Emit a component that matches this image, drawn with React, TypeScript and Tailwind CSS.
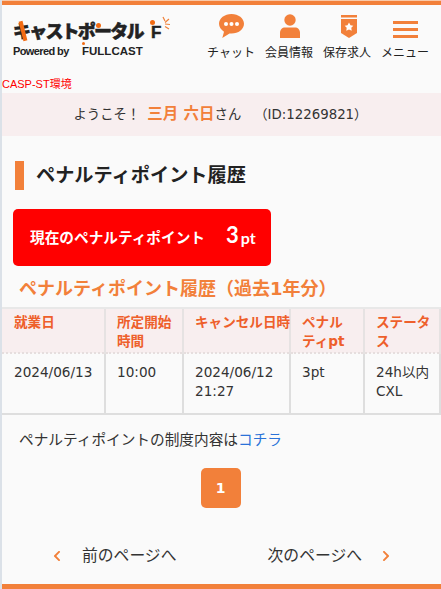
import React from "react";
import { FaChevronLeft, FaChevronRight } from "react-icons/fa";

const font = "font-['DejaVu_Sans','Noto_Sans_CJK_JP',sans-serif]";

const NavItem = ({ icon, label }: { icon: React.ReactNode; label: string }) => (
  <div className="flex w-[48px] flex-col items-center">
    <div className="flex h-[32px] items-center justify-center">{icon}</div>
    <span className="mt-[3px] text-[12px] leading-[16px] whitespace-nowrap text-[#222]">{label}</span>
  </div>
);

const Logo = () => (
  <div className="relative h-[36px] w-[160px]">
    <div className="text-[18px] leading-[20px] font-black tracking-[-1.800px] whitespace-nowrap text-[#222] [-webkit-text-stroke:0.5px_#222]">キャストポータル</div>
    <span className="absolute top-[-1px] left-[8px] h-[20px] w-[4px] rotate-[-14deg] bg-[#f26b12]" />
    <span className="absolute top-[1px] left-[83px] h-[5px] w-[5px] rounded-full bg-[#f26b12]" />
    <span className="absolute top-[2px] left-[138px] font-['Liberation_Sans'] text-[17px] leading-[18px] font-bold text-[#222] [-webkit-text-stroke:0.5px_#222]">F</span>
    <span className="absolute top-[-2px] left-[137px] h-[5px] w-[5px] rounded-full bg-[#f26b12]" />
    <svg className="absolute top-[-6px] left-[148px]" width="10" height="16" viewBox="0 0 10 16">
      <path d="M2 1l2 4M8 3L4 6.500M9 8.500l-5-.5M8 13L4 10.500" stroke="#f08038" strokeWidth="1.200" fill="none" />
    </svg>
    <div className="relative mt-[2px] font-['Liberation_Sans'] text-[11px] leading-[14px] font-bold whitespace-nowrap text-[#222]">
      <span className="tracking-[-0.600px]">Powered by</span>
      <span className="absolute top-0 left-[69px] text-[11.500px]">FULLCAST</span>
      <span className="absolute top-[-2px] left-[69px] h-[3px] w-[3px] rounded-full bg-[#f26b12]" />
    </div>
  </div>
);

const Th = ({ className, children }: { className: string; children: React.ReactNode }) => (
  <th className={`border-r-2 border-b-2 border-r-[#e6e2e2] border-b-[#e6dede] [border-bottom-style:dotted] bg-[#f8eeef] pt-[4px] pr-[2px] pb-[1px] pl-[11px] text-left align-top text-[13.600px] leading-[19px] font-bold text-[#ee5f2b] first:pl-[12px] ${className}`}>
    {children}
  </th>
);

const Td = ({ children }: { children: React.ReactNode }) => (
  <td className="border-r-2 border-b-2 border-[#dedede] pt-[9px] pr-[2px] pb-[10px] pl-[11px] align-top text-[13.600px] leading-[19px] text-[#333] first:pl-[12px]">
    {children}
  </td>
);

export default function App() {
  return (
    <div className={`flex h-[589px] w-[441px] flex-col overflow-hidden border-l-2 border-[#dbe1e8] bg-[#fafafa] ${font}`}>
      <div className="h-[5px] shrink-0 border-t border-[#f9c9a9] bg-[#f2803a]" />
      <header className="flex h-[71px] shrink-0 items-start justify-between pt-[5px] pr-[12px] pl-[11px]">
        <div className="pt-[12px]">
          <Logo />
        </div>
        <nav className="flex gap-[10px]">
          <NavItem
            label="チャット"
            icon={
              <svg width="25" height="24" viewBox="0 0 25 24">
                <path d="M12.500 0C5.600 0 0 4.300 0 9.800c0 3.300 2 6.100 5 7.900L3.300 24l7.200-4.500c.7.100 1.300.1 2 .1 6.900 0 12.500-4.300 12.500-9.800S19.400 0 12.500 0z" fill="#f2803a" />
                <circle cx="7" cy="10" r="2" fill="#fff" />
                <circle cx="12.500" cy="10" r="2" fill="#fff" />
                <circle cx="18" cy="10" r="2" fill="#fff" />
              </svg>
            }
          />
          <NavItem
            label="会員情報"
            icon={
              <svg className="ml-[2px]" width="20" height="24" viewBox="0 0 20 24">
                <circle cx="10" cy="6" r="5.700" fill="#f2803a" />
                <path d="M0 24v-5c0-3.500 2.200-5.500 5-5.500h10c2.800 0 5 2 5 5.500v5z" fill="#f2803a" />
              </svg>
            }
          />
          <NavItem
            label="保存求人"
            icon={
              <svg className="ml-[4px]" width="16" height="23" viewBox="0 0 16 23">
                <rect x="0" y="0" width="16" height="2.500" fill="#f2803a" />
                <path d="M0 4h16v14l-8 5-8-5z" fill="#f2803a" />
                <path d="M8 7.500l1.500 2.700 2.800.5-2 2.100.4 3L8 14.500l-2.700 1.300.4-3-2-2.100 2.800-.5z" fill="#fff" />
              </svg>
            }
          />
          <NavItem
            label="メニュー"
            icon={
              <div className="mt-[7px] flex w-[25px] flex-col gap-[4px]">
                <div className="h-[3px] bg-[#f2803a]" />
                <div className="h-[3px] bg-[#f2803a]" />
                <div className="h-[3px] bg-[#f2803a]" />
              </div>
            }
          />
        </nav>
      </header>
      <div className="h-[17px] shrink-0 font-['Liberation_Sans','Noto_Sans_CJK_JP',sans-serif] text-[11px] leading-[17px] text-[#ff0000]">CASP-ST環境</div>
      <div className="flex h-[43px] shrink-0 items-center justify-center bg-[#f8eeef] pr-[2px] text-[13.330px] text-[#333]">
        <span>ようこそ！</span>
        <span className="ml-[7px] text-[15.500px] font-bold text-[#f2803a]">三月 六日</span>
        <span>さん</span>
        <span className="ml-[13px]">（ID:12269821）</span>
      </div>
      <h1 className="mt-[25px] ml-[13px] flex h-[29px] shrink-0 items-center border-l-[9px] border-[#f2803a] pl-[12px] text-[19.200px] leading-[29px] font-bold text-[#222]">
        ペナルティポイント履歴
      </h1>
      <div className="mt-[19px] ml-[11px] flex h-[57px] w-[258px] shrink-0 items-center rounded-[5px] bg-[#ff0000] pl-[17px] font-bold text-white">
        <span className="text-[14.670px]">現在のペナルティポイント</span>
        <span className="mb-[5px] ml-[21px] font-['Lato'] text-[22px] leading-none">3</span>
        <span className="ml-[2px] font-['Lato'] text-[16px] leading-none">pt</span>
      </div>
      <h2 className="mt-[8px] ml-[17px] h-[33px] shrink-0 text-[18px] leading-[30px] font-bold whitespace-nowrap text-[#f2803a]">
        ペナルティポイント履歴（過去1年分）
      </h2>
      <div className="h-[2px] shrink-0 bg-[#e8e8e8]" />
      <table className="w-[439px] shrink-0 table-fixed border-collapse">
        <colgroup>
          <col className="w-[103px]" />
          <col className="w-[78px]" />
          <col className="w-[107px]" />
          <col className="w-[74px]" />
          <col />
        </colgroup>
        <thead>
          <tr className="h-[44px]">
            <Th className="">就業日</Th>
            <Th className="">所定開始時間</Th>
            <Th className="whitespace-nowrap">キャンセル日時</Th>
            <Th className="">
              ペナル
              <br />
              ティpt
            </Th>
            <Th className="border-r-0">ステータス</Th>
          </tr>
        </thead>
        <tbody>
          <tr className="h-[61px]">
            <Td>2024/06/13</Td>
            <Td>10:00</Td>
            <Td>
              2024/06/12
              <br />
              21:27
            </Td>
            <Td>3pt</Td>
            <Td>24h以内CXL</Td>
          </tr>
        </tbody>
      </table>
      <p className="mt-[15px] ml-[17px] text-[14.670px] leading-[20px] text-[#333]">
        ペナルティポイントの制度内容は<a className="text-[#2a72d8]">コチラ</a>
      </p>
      <div className="mt-[18px] flex shrink-0 justify-center pr-[2px]">
        <div className="flex h-[40px] w-[40px] items-center justify-center rounded-[5px] bg-[#f2803a] text-[14px] font-bold text-white">1</div>
      </div>
      <div className="mt-[38px] flex shrink-0 items-center justify-between pr-[49px] pl-[49px] text-[15.800px] leading-[20px] text-[#333]">
        <div className="flex items-center">
          <FaChevronLeft className="text-[12px] text-[#f2803a]" />
          <span className="ml-[19px]">前のページへ</span>
        </div>
        <div className="flex items-center">
          <span className="mr-[18px]">次のページへ</span>
          <FaChevronRight className="text-[12px] text-[#f2803a]" />
        </div>
      </div>
      <div className="mt-auto h-[5px] shrink-0 bg-[#f2803a]" />
    </div>
  );
}
